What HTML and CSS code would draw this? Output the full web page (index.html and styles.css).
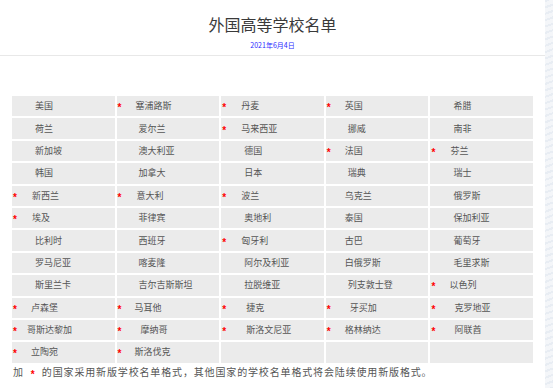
FILE: index.html
```html
<!DOCTYPE html>
<html lang="zh">
<head>
<meta charset="utf-8">
<title>外国高等学校名单</title>
<link rel="stylesheet" href="styles.css">
</head>
<body>
<div class="page">
  <main class="main">
    <header class="head">
      <h1 class="title">外国高等学校名单</h1>
      <p class="date">2021年6月4日</p>
    </header>
    <div class="list">
      <div class="cell"><i class="star"></i><span class="n o17">美国</span></div>
      <div class="cell"><i class="star">*</i><span class="n o13">塞浦路斯</span></div>
      <div class="cell"><i class="star">*</i><span class="n o14">丹麦</span></div>
      <div class="cell"><i class="star">*</i><span class="n o13">英国</span></div>
      <div class="cell"><i class="star"></i><span class="n o17">希腊</span></div>

      <div class="cell"><i class="star"></i><span class="n o17">荷兰</span></div>
      <div class="cell"><i class="star"></i><span class="n o16">爱尔兰</span></div>
      <div class="cell"><i class="star">*</i><span class="n o14">马来西亚</span></div>
      <div class="cell"><i class="star"></i><span class="n o16">挪威</span></div>
      <div class="cell"><i class="star"></i><span class="n o17">南非</span></div>

      <div class="cell"><i class="star"></i><span class="n o17">新加坡</span></div>
      <div class="cell"><i class="star"></i><span class="n o16">澳大利亚</span></div>
      <div class="cell"><i class="star"></i><span class="n o17">德国</span></div>
      <div class="cell"><i class="star">*</i><span class="n o13">法国</span></div>
      <div class="cell"><i class="star">*</i><span class="n o14">芬兰</span></div>

      <div class="cell"><i class="star"></i><span class="n o17">韩国</span></div>
      <div class="cell"><i class="star"></i><span class="n o16">加拿大</span></div>
      <div class="cell"><i class="star"></i><span class="n o17">日本</span></div>
      <div class="cell"><i class="star"></i><span class="n o16">瑞典</span></div>
      <div class="cell"><i class="star"></i><span class="n o17">瑞士</span></div>

      <div class="cell"><i class="star">*</i><span class="n o14">新西兰</span></div>
      <div class="cell"><i class="star">*</i><span class="n o14">意大利</span></div>
      <div class="cell"><i class="star">*</i><span class="n o14">波兰</span></div>
      <div class="cell"><i class="star"></i><span class="n o13">乌克兰</span></div>
      <div class="cell"><i class="star"></i><span class="n o17">俄罗斯</span></div>

      <div class="cell"><i class="star">*</i><span class="n o14">埃及</span></div>
      <div class="cell"><i class="star"></i><span class="n o16">菲律宾</span></div>
      <div class="cell"><i class="star"></i><span class="n o17">奥地利</span></div>
      <div class="cell"><i class="star"></i><span class="n o13">泰国</span></div>
      <div class="cell"><i class="star"></i><span class="n o17">保加利亚</span></div>

      <div class="cell"><i class="star"></i><span class="n o17">比利时</span></div>
      <div class="cell"><i class="star"></i><span class="n o16">西班牙</span></div>
      <div class="cell"><i class="star">*</i><span class="n o14">匈牙利</span></div>
      <div class="cell"><i class="star"></i><span class="n o13">古巴</span></div>
      <div class="cell"><i class="star"></i><span class="n o17">葡萄牙</span></div>

      <div class="cell"><i class="star"></i><span class="n o17">罗马尼亚</span></div>
      <div class="cell"><i class="star"></i><span class="n o16">喀麦隆</span></div>
      <div class="cell"><i class="star"></i><span class="n o17">阿尔及利亚</span></div>
      <div class="cell"><i class="star"></i><span class="n o13">白俄罗斯</span></div>
      <div class="cell"><i class="star"></i><span class="n o17">毛里求斯</span></div>

      <div class="cell"><i class="star"></i><span class="n o17">斯里兰卡</span></div>
      <div class="cell"><i class="star"></i><span class="n o16">吉尔吉斯斯坦</span></div>
      <div class="cell"><i class="star"></i><span class="n o17">拉脱维亚</span></div>
      <div class="cell"><i class="star"></i><span class="n o16">列支敦士登</span></div>
      <div class="cell"><i class="star">*</i><span class="n o13">以色列</span></div>

      <div class="cell"><i class="star">*</i><span class="n o13">卢森堡</span></div>
      <div class="cell"><i class="star">*</i><span class="n o12">马耳他</span></div>
      <div class="cell"><i class="star">*</i><span class="n o19">捷克</span></div>
      <div class="cell"><i class="star">*</i><span class="n o18">牙买加</span></div>
      <div class="cell"><i class="star">*</i><span class="n o18">克罗地亚</span></div>

      <div class="cell"><i class="star">*</i><span class="n o9">哥斯达黎加</span></div>
      <div class="cell"><i class="star">*</i><span class="n o18">摩纳哥</span></div>
      <div class="cell"><i class="star">*</i><span class="n o19">斯洛文尼亚</span></div>
      <div class="cell"><i class="star">*</i><span class="n o13">格林纳达</span></div>
      <div class="cell"><i class="star">*</i><span class="n o18">阿联酋</span></div>

      <div class="cell"><i class="star">*</i><span class="n o13">立陶宛</span></div>
      <div class="cell"><i class="star">*</i><span class="n o12">斯洛伐克</span></div>
      <div class="cell"></div>
      <div class="cell"></div>
      <div class="cell"></div>
    </div>
    <p class="note">加<i class="star note-star">*</i>的国家采用新版学校名单格式，其他国家的学校名单格式将会陆续使用新版格式。</p>
  </main>
  <aside class="edge"></aside>
</div>
</body>
</html>
```

FILE: styles.css
```css
html, body {
  margin: 0;
  padding: 0;
  background: #ffffff;
}

body {
  font-family: "Noto Sans CJK SC", "Liberation Sans", sans-serif;
  color: #555555;
}

.page {
  display: flex;
  width: 553px;
  height: 388px;
  overflow: hidden;
}

.main {
  width: 545px;
  flex: none;
}

.edge {
  flex: 1;
  background-color: #f4f6f9;
  background-image: repeating-linear-gradient(160deg, rgba(210, 220, 232, 0.35) 0 2px, rgba(255, 255, 255, 0) 2px 6px);
}

.head {
  padding-top: 14px;
  padding-bottom: 5px;
  border-bottom: 1px solid #e8e8e8;
  text-align: center;
}

.title {
  margin: 0;
  font-size: 16px;
  line-height: 20px;
  font-weight: normal;
  color: #3a3a3a;
}

.date {
  margin: 6px 0 0;
  font-size: 7px;
  line-height: 10px;
  color: #2a2aff;
}

.list {
  margin: 40px 12px 0;
  display: grid;
  grid-template-columns: repeat(5, 1fr);
  grid-auto-rows: 20.4px;
  gap: 2px;
}

.cell {
  background: #ebebeb;
  display: flex;
  align-items: center;
  font-size: 9px;
  line-height: 12px;
  color: #555555;
  white-space: nowrap;
}

.star {
  display: inline-block;
  width: 5px;
  margin-left: 1px;
  font-style: normal;
  font-family: "Liberation Sans", sans-serif;
  font-weight: bold;
  font-size: 10px;
  line-height: 10px;
  color: #ff0000;
  transform: translateY(2px);
}

.n { display: inline-block; }
.o9 { margin-left: 9px; }
.o12 { margin-left: 12px; }
.o13 { margin-left: 13px; }
.o14 { margin-left: 14px; }
.o16 { margin-left: 16px; }
.o17 { margin-left: 17px; }
.o18 { margin-left: 18px; }
.o19 { margin-left: 19px; }

.note {
  margin: 2px 12px 0 13px;
  font-size: 10px;
  line-height: 13px;
  letter-spacing: 0.85px;
  color: #555555;
  white-space: nowrap;
}

.note-star {
  margin: 0 6px 0 7px;
}
```
